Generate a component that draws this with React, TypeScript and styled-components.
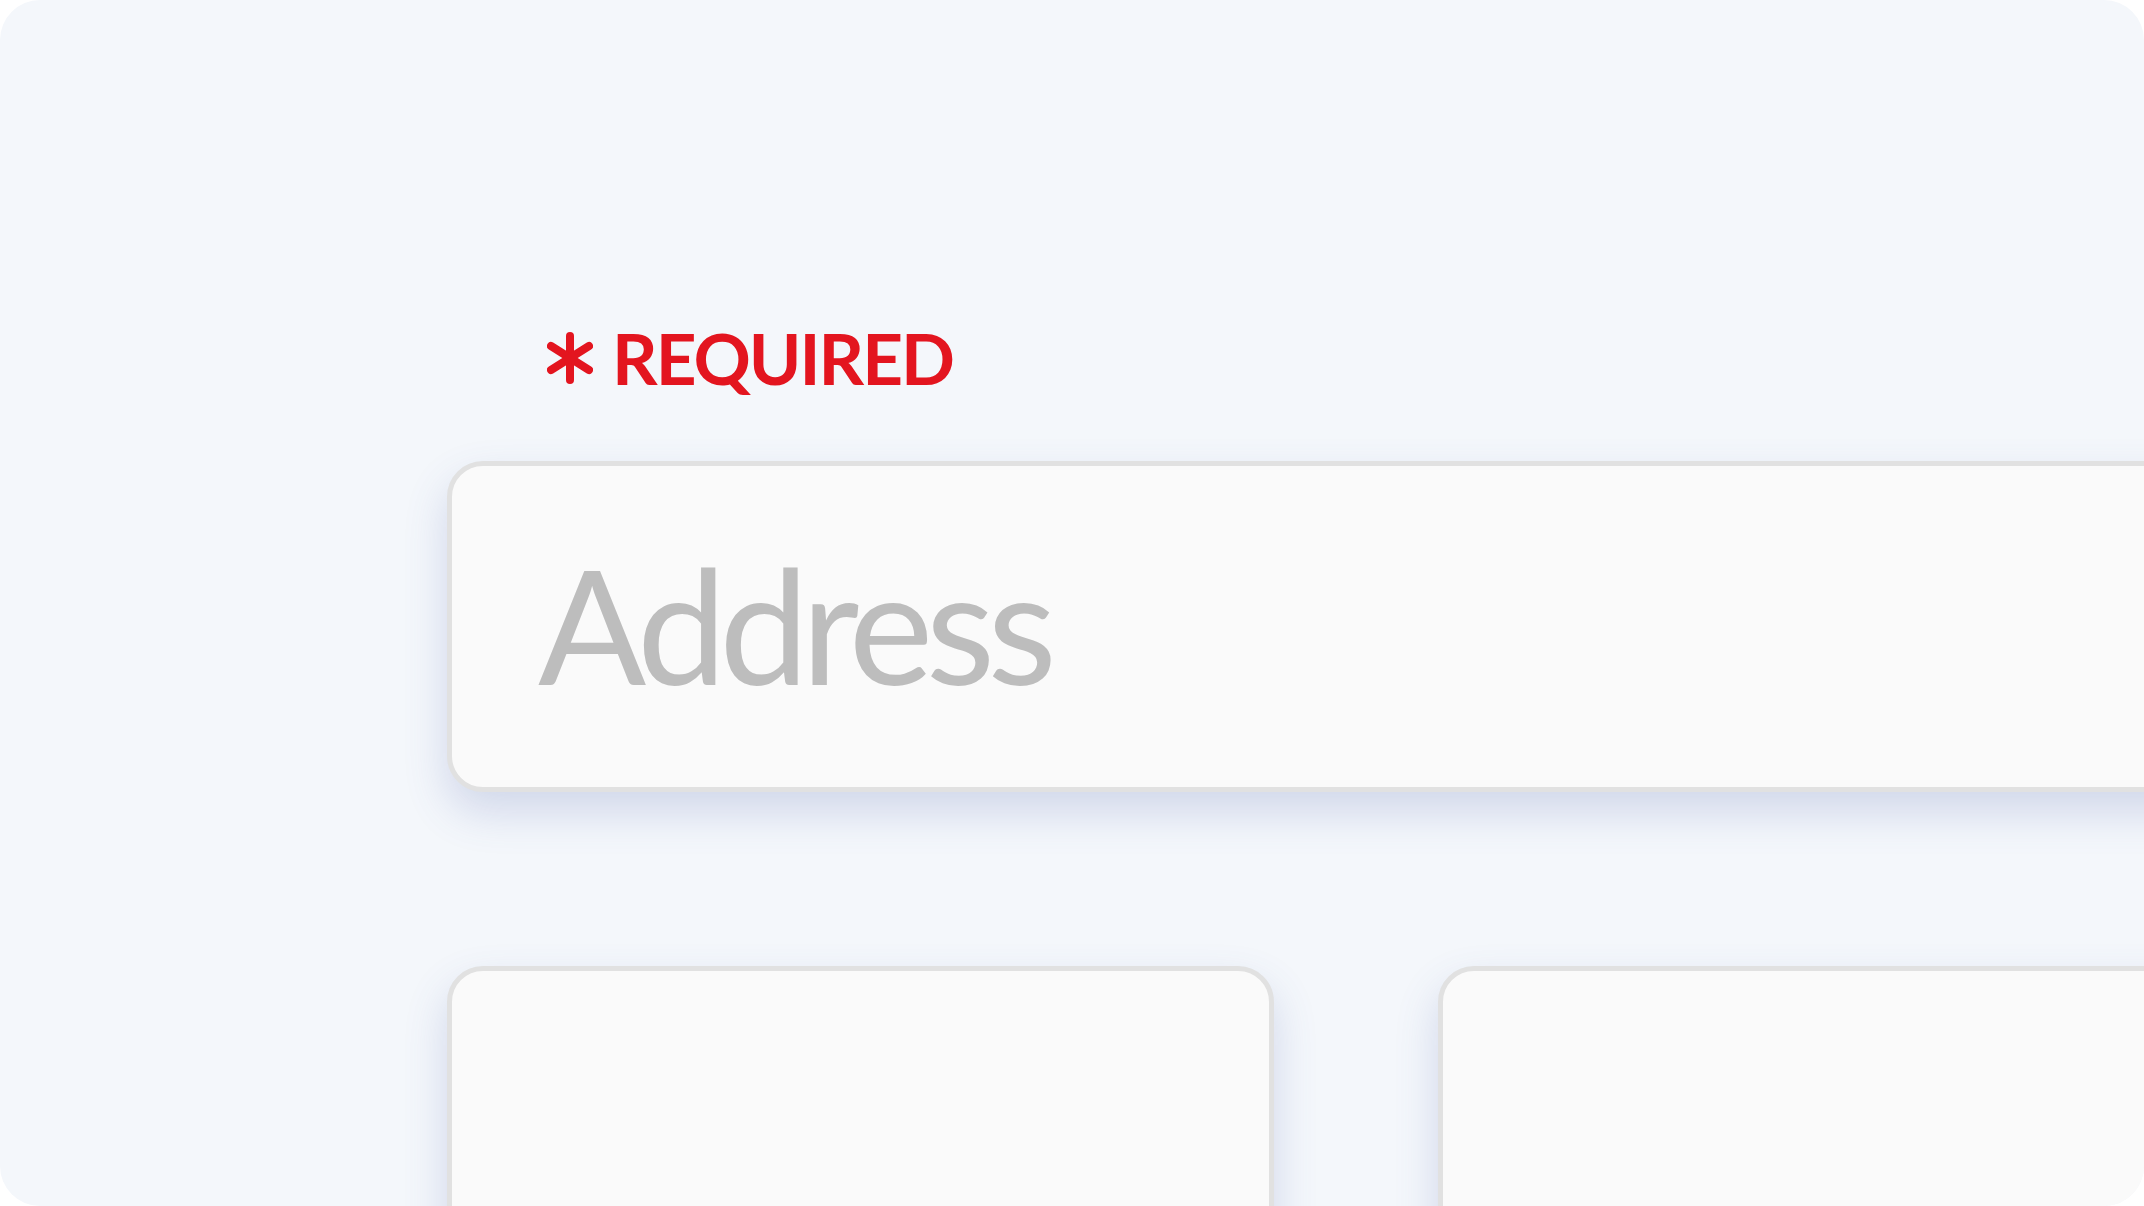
import React from 'react';
import styled, { createGlobalStyle } from 'styled-components';

const GlobalStyle = createGlobalStyle`
  html, body {
    margin: 0;
    padding: 0;
    background: #ffffff;
    overflow: hidden;
  }
  * {
    box-sizing: border-box;
  }
`;

const Frame = styled.div`
  width: 2144px;
  height: 1206px;
  background: #f4f7fb;
  border-radius: 40px;
  overflow: hidden;
  font-family: Lato, 'Noto Sans', sans-serif;
`;

const Form = styled.div`
  display: flex;
  flex-direction: column;
  padding: 322px 0 0 447px;
`;

const RequiredLabel = styled.div`
  display: flex;
  align-items: center;
  gap: 19px;
  margin-left: 100px;
  color: #e3151f;
  font-size: 71px;
  font-weight: 700;
  line-height: 72px;
  letter-spacing: -2px;
`;

const Field = styled.div<{ $width?: number }>`
  display: flex;
  align-items: center;
  flex-shrink: 0;
  width: ${p => (p.$width ? `${p.$width}px` : '2000px')};
  height: 331px;
  background: #fafafa;
  border: 5px solid #e1e1e1;
  border-radius: 36px;
  box-shadow: 0 20px 44px rgba(70, 90, 170, 0.2);
`;

const AddressField = styled(Field)`
  margin-top: 67px;
  padding: 0 0 8px 86px;
`;

const Placeholder = styled.span`
  color: #bdbdbd;
  font-size: 160px;
  font-weight: 400;
  line-height: 1;
  letter-spacing: -7.5px;
`;

const FieldRow = styled.div`
  display: flex;
  gap: 164px;
  margin-top: 174px;
`;

function Asterisk() {
  return (
    <svg width="46" height="52" viewBox="0 0 46 52">
      <g stroke="#e3151f" strokeWidth="8" strokeLinecap="round">
        <line x1="23" y1="4" x2="23" y2="48" />
        <line x1="4" y1="14" x2="42" y2="38" />
        <line x1="4" y1="38" x2="42" y2="14" />
      </g>
    </svg>
  );
}

export default function App() {
  return (
    <>
      <GlobalStyle />
      <Frame>
        <Form>
          <RequiredLabel>
            <Asterisk />
            <span>REQUIRED</span>
          </RequiredLabel>
          <AddressField>
            <Placeholder>Address</Placeholder>
          </AddressField>
          <FieldRow>
            <Field $width={827} />
            <Field $width={900} />
          </FieldRow>
        </Form>
      </Frame>
    </>
  );
}
